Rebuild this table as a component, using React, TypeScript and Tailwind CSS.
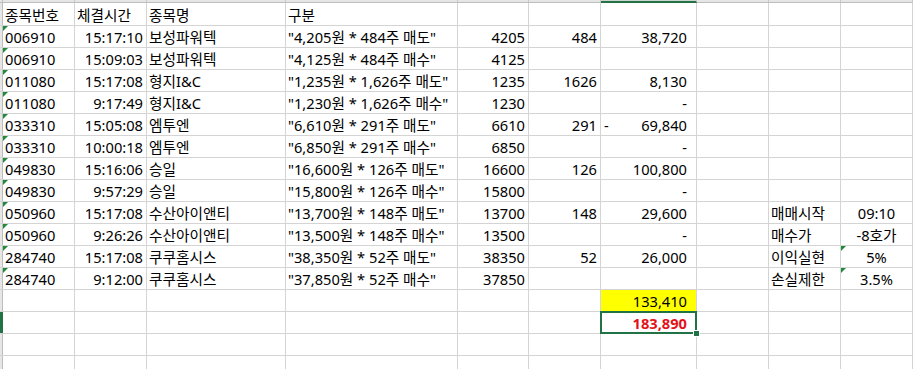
import React from "react";

type Align = "l" | "r" | "c" | "acc";

type Cell = {
  t?: string;
  a?: Align;
  tri?: boolean;
  neg?: boolean;
  yellow?: boolean;
  sel?: boolean;
};

const COLS = [72, 72, 139, 172, 71, 72, 96, 72, 72, 72];
const DEFAULT_ALIGN: Align[] = ["l", "r", "l", "l", "r", "r", "acc", "l", "l", "c"];

const ALIGN_CLASS: Record<Align, string> = {
  l: "justify-start pl-[2px]",
  r: "justify-end pr-[3px]",
  c: "justify-center",
  acc: "justify-end pr-[9px]",
};

const trades: [string, string, string, string, string, string, string][] = [
  ["006910", "15:17:10", "보성파워텍", '"4,205원 * 484주 매도"', "4205", "484", "38,720"],
  ["006910", "15:09:03", "보성파워텍", '"4,125원 * 484주 매수"', "4125", "", ""],
  ["011080", "15:17:08", "형지I&C", '"1,235원 * 1,626주 매도"', "1235", "1626", "8,130"],
  ["011080", "9:17:49", "형지I&C", '"1,230원 * 1,626주 매수"', "1230", "", "-"],
  ["033310", "15:05:08", "엠투엔", '"6,610원 * 291주 매도"', "6610", "291", "NEG:69,840"],
  ["033310", "10:00:18", "엠투엔", '"6,850원 * 291주 매수"', "6850", "", "-"],
  ["049830", "15:16:06", "승일", '"16,600원 * 126주 매도"', "16600", "126", "100,800"],
  ["049830", "9:57:29", "승일", '"15,800원 * 126주 매수"', "15800", "", "-"],
  ["050960", "15:17:08", "수산아이앤티", '"13,700원 * 148주 매도"', "13700", "148", "29,600"],
  ["050960", "9:26:26", "수산아이앤티", '"13,500원 * 148주 매수"', "13500", "", "-"],
  ["284740", "15:17:08", "쿠쿠홈시스", '"38,350원 * 52주 매도"', "38350", "52", "26,000"],
  ["284740", "9:12:00", "쿠쿠홈시스", '"37,850원 * 52주 매수"', "37850", "", ""],
];

// settings block on the right (I / J columns), keyed by trade index
const settings: Record<number, [string, string, boolean]> = {
  8: ["매매시작", "09:10", false],
  9: ["매수가", "-8호가", false],
  10: ["이익실현", "5%", true],
  11: ["손실제한", "3.5%", true],
};

function buildRows(): Cell[][] {
  const rows: Cell[][] = [];
  rows.push([
    { t: "종목번호" },
    { t: "체결시간", a: "l" },
    { t: "종목명" },
    { t: "구분" },
  ]);
  trades.forEach((tr, i) => {
    const g = tr[6].startsWith("NEG:")
      ? { t: tr[6].slice(4), neg: true }
      : { t: tr[6] };
    const row: Cell[] = [
      { t: tr[0], tri: true },
      { t: tr[1] },
      { t: tr[2] },
      { t: tr[3] },
      { t: tr[4] },
      { t: tr[5] },
      g,
      {},
    ];
    const s = settings[i];
    if (s) {
      row.push({ t: s[0] }, { t: s[1], tri: s[2] });
    }
    rows.push(row);
  });
  rows.push([{}, {}, {}, {}, {}, {}, { t: "133,410", yellow: true }]);
  rows.push([{}, {}, {}, {}, {}, {}, { t: "183,890", sel: true }]);
  rows.push([]);
  rows.push([]);
  return rows;
}

function Triangle() {
  return (
    <span className="absolute left-0 top-0 h-0 w-0 border-t-[5px] border-r-[5px] border-t-[#1f8a3a] border-r-transparent" />
  );
}

function GridCell({ cell, col, width }: { cell: Cell; col: number; width: number }) {
  const align = cell.a ?? DEFAULT_ALIGN[col];
  return (
    <div
      style={{ width }}
      className={`relative flex h-full shrink-0 items-end border-r border-[#d4d4d4] ${ALIGN_CLASS[align]} ${
        cell.yellow ? "bg-[#ffff00]" : ""
      } ${cell.sel ? "z-10" : ""}`}
    >
      {cell.tri && <Triangle />}
      {cell.neg && <span className="absolute bottom-0 left-[3px] leading-[20px]">-</span>}
      {cell.t && (
        <span
          className={`whitespace-nowrap leading-[20px] ${
            cell.sel ? "font-bold text-[#e3121a]" : ""
          }`}
        >
          {cell.t}
        </span>
      )}
      {cell.sel && (
        <>
          <span className="pointer-events-none absolute -bottom-[1px] -left-[1px] -right-[1px] -top-[1px] border-2 border-[#217346]" />
          <span className="absolute -bottom-[4px] -right-[4px] h-[7px] w-[7px] border border-white bg-[#217346]" />
        </>
      )}
    </div>
  );
}

export default function App() {
  const rows = buildRows();

  return (
    <div
      className="h-[369px] w-[913px] overflow-hidden bg-white text-[14.67px] text-black"
      style={{ fontFamily: '"Noto Sans", "Noto Sans CJK KR", sans-serif' }}
    >
      {/* column header strip (mostly scrolled off) */}
      <div className="flex h-[3px]">
        <div className="h-full w-[3px] shrink-0 border-b border-r border-[#bdbdbd] bg-[#e6e6e6]" />
        {COLS.map((w, i) => (
          <div
            key={i}
            style={{ width: w }}
            className={
              i === 6
                ? "h-full shrink-0 border-b-2 border-r border-b-[#217346] border-r-[#c8c8c8] bg-[#d2d2d2]"
                : "h-full shrink-0 border-b border-r border-b-[#bdbdbd] border-r-[#c8c8c8] bg-[#e6e6e6]"
            }
          />
        ))}
      </div>

      {rows.map((row, r) => (
        <div
          key={r}
          className={`flex border-b border-[#d4d4d4] ${r === 0 ? "h-[23px]" : "h-[22px]"}`}
        >
          <div
            className={
              r === 14
                ? "h-full w-[3px] shrink-0 bg-[#217346]"
                : "h-full w-[3px] shrink-0 border-r border-[#bdbdbd] bg-[#e6e6e6]"
            }
          />
          {COLS.map((w, c) => (
            <GridCell key={c} cell={row[c] ?? {}} col={c} width={w} />
          ))}
        </div>
      ))}
    </div>
  );
}
